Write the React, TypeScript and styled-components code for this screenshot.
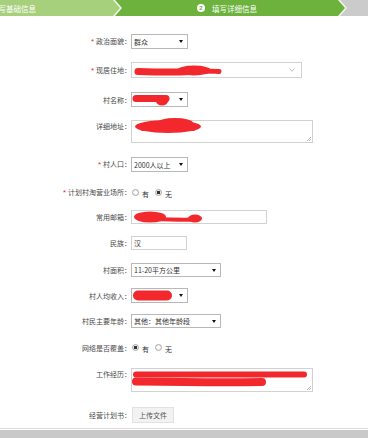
import React from "react";
import styled, { createGlobalStyle } from "styled-components";

const RED = "#f2282c";

const Global = createGlobalStyle`
  html, body { margin: 0; padding: 0; background: #fff; }
  body {
    font-family: "Noto Sans CJK SC", "Noto Sans", sans-serif;
    width: 368px;
    height: 438px;
    overflow: hidden;
  }
`;

const Page = styled.div`
  width: 368px;
  height: 438px;
  display: flex;
  flex-direction: column;
  overflow: hidden;
  background: #fff;
`;

const Steps = styled.div`
  flex: none;
  display: flex;
  height: 16px;
  background: #f1f6e9;
  overflow: hidden;
`;

const Step = styled.div<{ $bg: string; $w: number; $ml: number; $pr?: number; $pl?: number }>`
  flex: none;
  width: ${(p) => p.$w}px;
  height: 16px;
  margin-left: ${(p) => p.$ml}px;
  padding-right: ${(p) => p.$pr ?? 0}px;
  padding-left: ${(p) => p.$pl ?? 0}px;
  box-sizing: border-box;
  background: ${(p) => p.$bg};
  clip-path: polygon(0 0, calc(100% - 7px) 0, 100% 50%, calc(100% - 7px) 100%, 0 100%, 7px 50%);
  display: flex;
  align-items: center;
  justify-content: center;
  gap: 7px;
  color: #fff;
  font-size: 7.5px;
  white-space: nowrap;
`;

const StepNum = styled.span<{ $color: string }>`
  width: 8px;
  height: 8px;
  border-radius: 50%;
  background: #fff;
  color: ${(p) => p.$color};
  font-size: 6px;
  line-height: 8px;
  text-align: center;
  font-family: "Liberation Sans", sans-serif;
  font-weight: bold;
`;

const Form = styled.div`
  display: flex;
  flex-direction: column;
  padding-top: 18px;
`;

const Row = styled.div<{ $mt: number; $top?: boolean }>`
  display: flex;
  align-items: ${(p) => (p.$top ? "flex-start" : "center")};
  margin-top: ${(p) => p.$mt}px;
`;

const Label = styled.div<{ $pt?: number }>`
  flex: none;
  width: 132px;
  padding-right: 1px;
  padding-top: ${(p) => p.$pt ?? 0}px;
  box-sizing: border-box;
  text-align: right;
  font-size: 7px;
  line-height: 10px;
  color: #4a4a4a;
  white-space: nowrap;
`;

const Star = styled.span`
  color: ${RED};
  font-size: 8px;
  margin-right: 2px;
  font-family: "Liberation Sans", sans-serif;
`;

const Field = styled.div<{ $w: number; $h: number; $dark?: boolean; $area?: boolean }>`
  flex: none;
  position: relative;
  box-sizing: border-box;
  width: ${(p) => p.$w}px;
  height: ${(p) => p.$h}px;
  margin-left: -1px;
  border: 1px solid ${(p) => (p.$dark ? "#b8b8b8" : "#d2d2d2")};
  background: #fff;
  display: flex;
  align-items: ${(p) => (p.$area ? "flex-start" : "center")};
  padding: 0 4px 0 2px;
  font-size: 7px;
  color: #333;
  white-space: nowrap;
`;

const Value = styled.span`
  flex: 1;
  line-height: 10px;
`;

const Arrow = styled.svg`
  flex: none;
  margin-left: auto;
  width: 4px;
  height: 3px;
`;

const Chevron = styled.svg`
  flex: none;
  margin-left: auto;
  margin-right: 2px;
  width: 6px;
  height: 4px;
`;

const Grip = styled.svg`
  position: absolute;
  right: 1px;
  bottom: 1px;
  width: 5px;
  height: 5px;
`;

const Scribble = styled.svg<{ $ml: number; $mt?: number }>`
  flex: none;
  margin-left: ${(p) => p.$ml}px;
  margin-top: ${(p) => p.$mt ?? 0}px;
  overflow: visible;
`;

const Radios = styled.div`
  display: flex;
  align-items: center;
  height: 13px;
  padding-left: 0px;
  font-size: 7px;
  color: #333;
`;

const Radio = styled.span<{ $on?: boolean }>`
  flex: none;
  width: 7px;
  height: 7px;
  box-sizing: border-box;
  border-radius: 50%;
  border: 1px solid #aaa;
  background: ${(p) =>
    p.$on
      ? "radial-gradient(circle, #333 0 1.4px, #e8e8e8 1.9px)"
      : "radial-gradient(circle, #fff 0 1px, #e6e6e6 3px)"};
`;

const RadioText = styled.span`
  margin: 2px 6px 0 3px;
  line-height: 10px;
`;

const UploadButton = styled.div`
  flex: none;
  box-sizing: border-box;
  width: 42px;
  height: 16px;
  border: 1px solid #e2e2e2;
  background: #f2f2f2;
  color: #555;
  font-size: 7px;
  display: flex;
  align-items: center;
  justify-content: center;
`;

const Divider = styled.div`
  flex: none;
  margin-top: 5px;
  height: 1px;
  background: #dcdcdc;
`;

const BottomBar = styled.div`
  flex: none;
  margin-top: 1px;
  height: 8px;
  background: #c9c9c9;
`;

const SelectArrow = () => (
  <Arrow viewBox="0 0 4 3">
    <path d="M0 0 L4 0 L2 3 Z" fill="#111" />
  </Arrow>
);

const AreaGrip = () => (
  <Grip viewBox="0 0 5 5">
    <path d="M5 1 L1 5 M5 3 L3 5" stroke="#999" strokeWidth="0.7" />
  </Grip>
);

const Req = ({ children }: { children: React.ReactNode }) => (
  <>
    <Star>*</Star>
    {children}
  </>
);

export default function App() {
  return (
    <Page>
      <Global />
      <Steps>
        <Step $bg="#a6d07c" $w={238} $ml={-118} $pl={10}>
          <StepNum $color="#a6d07c">1</StepNum>
          填写基础信息
        </Step>
        <Step $bg="#6cb23d" $w={230} $ml={-5} $pr={6}>
          <StepNum $color="#6cb23d">2</StepNum>
          填写详细信息
        </Step>
        <Step $bg="#cbcbcb" $w={40} $ml={-5} />
      </Steps>

      <Form>
        <Row $mt={0}>
          <Label>
            <Req>政治面貌：</Req>
          </Label>
          <Field $w={57} $h={15} $dark>
            <Value>群众</Value>
            <SelectArrow />
          </Field>
        </Row>

        <Row $mt={13}>
          <Label>
            <Req>现居住地：</Req>
          </Label>
          <Field $w={171} $h={16}>
            <Scribble $ml={0} width="92" height="13" viewBox="0 0 92 13">
              <path d="M4 7.5 C 20 8, 40 8.5, 55 7.5" stroke={RED} strokeWidth="7" strokeLinecap="round" fill="none" />
              <ellipse cx="60" cy="6.5" rx="17" ry="5" fill={RED} />
              <path d="M60 7 C 70 7, 80 7, 85 7.5" stroke={RED} strokeWidth="5" strokeLinecap="round" fill="none" />
            </Scribble>
            <Chevron viewBox="0 0 6 4">
              <path d="M0.5 0.5 L3 3.3 L5.5 0.5" stroke="#aaa" strokeWidth="0.8" fill="none" />
            </Chevron>
          </Field>
        </Row>

        <Row $mt={14}>
          <Label>村名称：</Label>
          <Field $w={57} $h={15} $dark>
            <Scribble $ml={-2} width="40" height="12" viewBox="0 0 40 12">
              <path d="M4 4.5 L 34 4.5" stroke={RED} strokeWidth="7" strokeLinecap="round" />
              <ellipse cx="30" cy="7" rx="6" ry="4.5" fill={RED} />
            </Scribble>
            <SelectArrow />
          </Field>
        </Row>

        <Row $mt={13} $top>
          <Label $pt={1}>详细地址：</Label>
          <Field $w={182} $h={23} $area>
            <Scribble $ml={-2} $mt={-4} width="74" height="17" viewBox="0 0 74 17">
              <ellipse cx="36" cy="9.5" rx="33" ry="6.5" fill={RED} />
              <ellipse cx="43" cy="6" rx="18" ry="5" fill={RED} />
            </Scribble>
            <AreaGrip />
          </Field>
        </Row>

        <Row $mt={14}>
          <Label>
            <Req>村人口：</Req>
          </Label>
          <Field $w={57} $h={15} $dark>
            <Value>2000人以上</Value>
            <SelectArrow />
          </Field>
        </Row>

        <Row $mt={14}>
          <Label>
            <Req>计划村淘营业场所：</Req>
          </Label>
          <Radios>
            <Radio />
            <RadioText>有</RadioText>
            <Radio $on />
            <RadioText>无</RadioText>
          </Radios>
        </Row>

        <Row $mt={11}>
          <Label>常用邮箱：</Label>
          <Field $w={136} $h={14}>
            <Scribble $ml={-2} width="74" height="13" viewBox="0 0 74 13">
              <ellipse cx="18" cy="6" rx="16" ry="5.5" fill={RED} />
              <path d="M20 8 C 35 8.5, 50 9, 66 8.5" stroke={RED} strokeWidth="4" strokeLinecap="round" fill="none" />
              <ellipse cx="63" cy="7.5" rx="7" ry="4" fill={RED} />
            </Scribble>
          </Field>
        </Row>

        <Row $mt={12}>
          <Label>民族：</Label>
          <Field $w={56} $h={14}>
            <Value>汉</Value>
          </Field>
        </Row>

        <Row $mt={13}>
          <Label>村面积：</Label>
          <Field $w={90} $h={14} $dark>
            <Value>11-20平方公里</Value>
            <SelectArrow />
          </Field>
        </Row>

        <Row $mt={11}>
          <Label>村人均收入：</Label>
          <Field $w={57} $h={15} $dark>
            <Scribble $ml={-2} width="42" height="13" viewBox="0 0 42 13">
              <rect x="1" y="1.5" width="39" height="10" rx="5" fill={RED} />
            </Scribble>
            <SelectArrow />
          </Field>
        </Row>

        <Row $mt={11}>
          <Label>村民主要年龄：</Label>
          <Field $w={90} $h={14} $dark>
            <Value>其他：其他年龄段</Value>
            <SelectArrow />
          </Field>
        </Row>

        <Row $mt={13}>
          <Label>网络是否覆盖：</Label>
          <Radios>
            <Radio $on />
            <RadioText>有</RadioText>
            <Radio />
            <RadioText>无</RadioText>
          </Radios>
        </Row>

        <Row $mt={14} $top>
          <Label $pt={1}>工作经历：</Label>
          <Field $w={182} $h={24} $area>
            <Scribble $ml={-2} $mt={1} width="178" height="19" viewBox="0 0 178 19">
              <path d="M4 4.5 L 172 4.5" stroke={RED} strokeWidth="6" strokeLinecap="round" />
              <path d="M4 11.5 C 40 12, 90 12.5, 130 12" stroke={RED} strokeWidth="8" strokeLinecap="round" fill="none" />
            </Scribble>
            <AreaGrip />
          </Field>
        </Row>

        <Row $mt={15}>
          <Label>经营计划书：</Label>
          <UploadButton>上传文件</UploadButton>
        </Row>
      </Form>

      <Divider />
      <BottomBar />
    </Page>
  );
}
